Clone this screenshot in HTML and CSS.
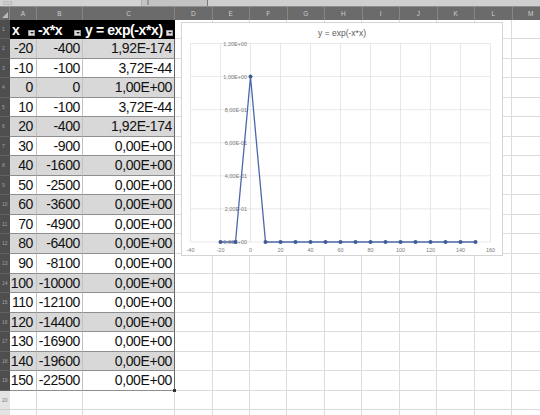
FILE: index.html
```html
<!DOCTYPE html>
<html>
<head>
<meta charset="utf-8">
<link rel="stylesheet" href="styles.css">
</head>
<body>
<div class="topbar">
  <div class="namebox">D15</div>
  <div class="tools"><span class="dots"></span></div>
  <div class="formula"></div>
</div>
<div class="colheads">
  <div class="ch corner"><span class="tri"></span></div>
  <div class="ch wa">A</div>
  <div class="ch wb">B</div>
  <div class="ch wc">C</div>
  <div class="ch">D</div>
  <div class="ch">E</div>
  <div class="ch">F</div>
  <div class="ch">G</div>
  <div class="ch">H</div>
  <div class="ch">I</div>
  <div class="ch">J</div>
  <div class="ch">K</div>
  <div class="ch">L</div>
  <div class="ch">M</div>
</div>
<div class="sheet">
  <div class="row r1">
    <div class="rn">1</div>
    <div class="cell wa th"><span>x</span><span class="flt"></span></div>
    <div class="cell wb th"><span>-x*x</span><span class="flt"></span></div>
    <div class="cell wc th"><span>y = exp(-x*x)</span><span class="flt"></span></div>
    <div class="fill"></div>
  </div>
  <div class="row g"><div class="rn">2</div><div class="cell wa">-20</div><div class="cell wb">-400</div><div class="cell wc">1,92E-174</div><div class="fill"></div></div>
  <div class="row"><div class="rn">3</div><div class="cell wa">-10</div><div class="cell wb">-100</div><div class="cell wc">3,72E-44</div><div class="fill"></div></div>
  <div class="row g"><div class="rn">4</div><div class="cell wa">0</div><div class="cell wb">0</div><div class="cell wc">1,00E+00</div><div class="fill"></div></div>
  <div class="row"><div class="rn">5</div><div class="cell wa">10</div><div class="cell wb">-100</div><div class="cell wc">3,72E-44</div><div class="fill"></div></div>
  <div class="row g"><div class="rn">6</div><div class="cell wa">20</div><div class="cell wb">-400</div><div class="cell wc">1,92E-174</div><div class="fill"></div></div>
  <div class="row"><div class="rn">7</div><div class="cell wa">30</div><div class="cell wb">-900</div><div class="cell wc">0,00E+00</div><div class="fill"></div></div>
  <div class="row g"><div class="rn">8</div><div class="cell wa">40</div><div class="cell wb">-1600</div><div class="cell wc">0,00E+00</div><div class="fill"></div></div>
  <div class="row"><div class="rn">9</div><div class="cell wa">50</div><div class="cell wb">-2500</div><div class="cell wc">0,00E+00</div><div class="fill"></div></div>
  <div class="row g"><div class="rn">10</div><div class="cell wa">60</div><div class="cell wb">-3600</div><div class="cell wc">0,00E+00</div><div class="fill"></div></div>
  <div class="row"><div class="rn">11</div><div class="cell wa">70</div><div class="cell wb">-4900</div><div class="cell wc">0,00E+00</div><div class="fill"></div></div>
  <div class="row g"><div class="rn">12</div><div class="cell wa">80</div><div class="cell wb">-6400</div><div class="cell wc">0,00E+00</div><div class="fill"></div></div>
  <div class="row"><div class="rn">13</div><div class="cell wa">90</div><div class="cell wb">-8100</div><div class="cell wc">0,00E+00</div><div class="fill"></div></div>
  <div class="row g"><div class="rn">14</div><div class="cell wa">100</div><div class="cell wb">-10000</div><div class="cell wc">0,00E+00</div><div class="fill"></div></div>
  <div class="row"><div class="rn">15</div><div class="cell wa">110</div><div class="cell wb">-12100</div><div class="cell wc">0,00E+00</div><div class="fill"></div></div>
  <div class="row g"><div class="rn">16</div><div class="cell wa">120</div><div class="cell wb">-14400</div><div class="cell wc">0,00E+00</div><div class="fill"></div></div>
  <div class="row"><div class="rn">17</div><div class="cell wa">130</div><div class="cell wb">-16900</div><div class="cell wc">0,00E+00</div><div class="fill"></div></div>
  <div class="row g"><div class="rn">18</div><div class="cell wa">140</div><div class="cell wb">-19600</div><div class="cell wc">0,00E+00</div><div class="fill"></div></div>
  <div class="row"><div class="rn">19</div><div class="cell wa">150</div><div class="cell wb">-22500</div><div class="cell wc last">0,00E+00</div><div class="fill"></div></div>
  <div class="row off"><div class="rn">20</div><div class="cell wa"></div><div class="cell wb"></div><div class="cell wc"></div><div class="fill"></div></div>
  <div class="row off"><div class="rn"></div><div class="cell wa"></div><div class="cell wb"></div><div class="cell wc"></div><div class="fill"></div></div>

  <div class="chart">
    <svg width="320" height="232" viewBox="0 0 320 232" xmlns="http://www.w3.org/2000/svg">
      <text x="160" y="13" class="title" text-anchor="middle">y = exp(-x*x)</text>
      <g stroke="#e2e2e2" stroke-width="0.8" fill="none">
        <line x1="8.5" y1="20.5" x2="308.5" y2="20.5"/>
        <line x1="8.5" y1="53.6" x2="308.5" y2="53.6"/>
        <line x1="8.5" y1="86.7" x2="308.5" y2="86.7"/>
        <line x1="8.5" y1="119.8" x2="308.5" y2="119.8"/>
        <line x1="8.5" y1="152.8" x2="308.5" y2="152.8"/>
        <line x1="8.5" y1="185.9" x2="308.5" y2="185.9"/>
        <line x1="8.5" y1="219" x2="308.5" y2="219"/>
        <line x1="8.5" y1="20.5" x2="8.5" y2="219"/>
        <line x1="38.5" y1="20.5" x2="38.5" y2="219"/>
        <line x1="68.5" y1="20.5" x2="68.5" y2="219"/>
        <line x1="98.5" y1="20.5" x2="98.5" y2="219"/>
        <line x1="128.5" y1="20.5" x2="128.5" y2="219"/>
        <line x1="158.5" y1="20.5" x2="158.5" y2="219"/>
        <line x1="188.5" y1="20.5" x2="188.5" y2="219"/>
        <line x1="218.5" y1="20.5" x2="218.5" y2="219"/>
        <line x1="248.5" y1="20.5" x2="248.5" y2="219"/>
        <line x1="278.5" y1="20.5" x2="278.5" y2="219"/>
        <line x1="308.5" y1="20.5" x2="308.5" y2="219"/>
      </g>
      <g class="ylab" text-anchor="end">
        <text x="65" y="22.5">1,20E+00</text>
        <text x="65" y="55.6">1,00E+00</text>
        <text x="65" y="88.7">8,00E-01</text>
        <text x="65" y="121.8">6,00E-01</text>
        <text x="65" y="154.8">4,00E-01</text>
        <text x="65" y="187.9">2,00E-01</text>
        <text x="65" y="221">0,00E+00</text>
      </g>
      <g class="xlab" text-anchor="middle">
        <text x="8.5" y="229">-40</text>
        <text x="38.5" y="229">-20</text>
        <text x="68.5" y="229">0</text>
        <text x="98.5" y="229">20</text>
        <text x="128.5" y="229">40</text>
        <text x="158.5" y="229">60</text>
        <text x="188.5" y="229">80</text>
        <text x="218.5" y="229">100</text>
        <text x="248.5" y="229">120</text>
        <text x="278.5" y="229">140</text>
        <text x="308.5" y="229">160</text>
      </g>
      <polyline fill="none" stroke="#4b68aa" stroke-width="1.3" stroke-linejoin="round"
        points="38.5,219 53.5,219 68.5,53.6 83.5,219 98.5,219 113.5,219 128.5,219 143.5,219 158.5,219 173.5,219 188.5,219 203.5,219 218.5,219 233.5,219 248.5,219 263.5,219 278.5,219 293.5,219"/>
      <g fill="#405a94">
        <circle cx="38.5" cy="219" r="2"/>
        <circle cx="53.5" cy="219" r="2"/>
        <circle cx="68.5" cy="53.6" r="2"/>
        <circle cx="83.5" cy="219" r="2"/>
        <circle cx="98.5" cy="219" r="2"/>
        <circle cx="113.5" cy="219" r="2"/>
        <circle cx="128.5" cy="219" r="2"/>
        <circle cx="143.5" cy="219" r="2"/>
        <circle cx="158.5" cy="219" r="2"/>
        <circle cx="173.5" cy="219" r="2"/>
        <circle cx="188.5" cy="219" r="2"/>
        <circle cx="203.5" cy="219" r="2"/>
        <circle cx="218.5" cy="219" r="2"/>
        <circle cx="233.5" cy="219" r="2"/>
        <circle cx="248.5" cy="219" r="2"/>
        <circle cx="263.5" cy="219" r="2"/>
        <circle cx="278.5" cy="219" r="2"/>
        <circle cx="293.5" cy="219" r="2"/>
      </g>
    </svg>
  </div>
</div>
</body>
</html>
```
FILE: styles.css
```css
* { box-sizing: border-box; margin: 0; padding: 0; }
html, body { width: 540px; height: 415px; overflow: hidden; background: #ffffff; }
body { font-family: "Liberation Sans", Arial, sans-serif; }

/* formula bar remnant */
.topbar { height: 7px; display: flex; background: #c3c3c3; border-bottom: 1px solid #8f8f8f; overflow: hidden; }
.namebox { width: 142px; background: #d3d3d3; color: #a8a8a8; font-size: 5px; line-height: 6px; padding-left: 3px; border-right: 1px solid #b0b0b0; }
.tools { width: 66px; border-right: 1px solid #777; }
.dots { display: block; width: 2px; height: 5px; margin-left: 5px; background: #9a9a9a; }
.formula { flex: 1; background: #cfcfcf; }

/* column headers */
.colheads { height: 13px; display: flex; background: #6b6b6b; }
.ch { flex: none; width: 37.5px; color: #cdcdcd; font-size: 6.5px; line-height: 13px; text-align: center; border-right: 1px solid #868686; }
.ch.corner { width: 10px; display: flex; align-items: flex-end; padding: 0 0 2px 2px; }
.tri { width: 0; height: 0; border-left: 6px solid transparent; border-bottom: 6px solid #b9b9b9; }
.wa { width: 27px; }
.wb { width: 46px; }
.wc { width: 92px; }

/* sheet */
.sheet { position: relative; }
.row { display: flex; height: 19.55px; }
.row.r1 { height: 19px; }
.rn { flex: none; width: 10px; background: #4e4e4e; color: #a2a2a2; font-size: 5px; line-height: 19px; padding-left: 2px; border-bottom: 1px solid #626262; }
.row.off .rn { background: #e3e3e3; color: #7d7d7d; border-bottom: 1px solid #cfcfcf; }

.cell { flex: none; font-size: 14px; letter-spacing: -0.4px; line-height: 19px; text-align: right; padding-right: 2px; color: #111; border-bottom: 1px solid #8e8e8e; border-right: 1px solid #c2c2c2; white-space: nowrap; }
.cell.wa { padding-right: 3px; }
.cell.wc { border-right: 1px solid #666; }
.row.g .cell { background: #d8d8d8; }
.row.off .cell { border-bottom: 1px solid #dadada; border-right: 1px solid #dadada; }
.cell.last { position: relative; }
.cell.last::after { content: ""; position: absolute; right: -2px; bottom: -2px; width: 3px; height: 3px; background: #333; }

.th { background: #000; color: #fff; font-weight: bold; text-align: left; padding: 0 1px 0 2px; display: flex; align-items: center; border-bottom: 1px solid #000; border-right: 1px solid #000; }
.cell.th.wa { padding-right: 1px; }
.cell.th.wb { padding-left: 1px; }
.cell.th.wc { border-right: 1px solid #000; }
.th span:first-child { margin-top: 3px; }
.flt { flex: none; margin-left: auto; align-self: flex-end; margin-bottom: 2px; width: 7px; height: 6px; background: #dedede; border: 1px solid #9a9a9a; display: flex; align-items: center; justify-content: center; }
.flt::after { content: ""; width: 0; height: 0; border-left: 2px solid transparent; border-right: 2px solid transparent; border-top: 2px solid #222; }

.fill { flex: 1; border-bottom: 1px solid #dcdcdc; background: repeating-linear-gradient(to right, transparent 0 36.5px, #dcdcdc 36.5px 37.5px); }

/* chart object floating over the cells */
.chart { position: absolute; left: 181px; top: 2px; width: 322px; height: 234px; background: #fff; border: 1px solid #d4d4d4; }
.chart svg { display: block; font-family: "Liberation Sans", Arial, sans-serif; }
.title { font-size: 8.5px; fill: #5a5a5a; }
.ylab text { font-size: 5.5px; fill: #7a7a7a; }
.xlab text { font-size: 5.5px; fill: #7a7a7a; }
```
